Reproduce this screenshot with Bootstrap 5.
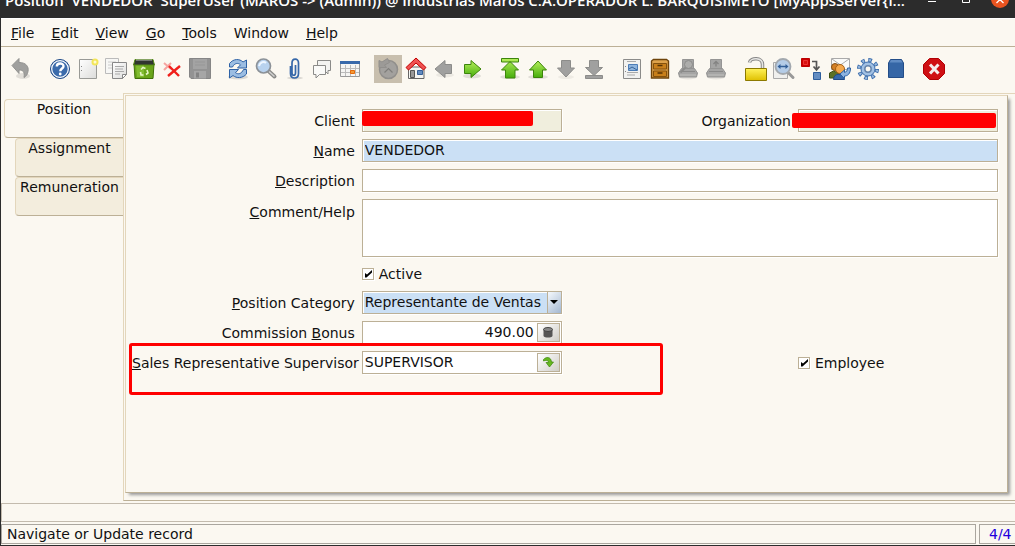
<!DOCTYPE html>
<html lang="en">
<head>
<meta charset="utf-8">
<meta name="viewport" content="width=device-width, initial-scale=1">
<title>Position VENDEDOR</title>
<link href="https://cdn.jsdelivr.net/npm/bootstrap@5.3.0/dist/css/bootstrap.min.css" rel="stylesheet">
<style>
:root{--cream:#fbf8f1;--line:#bcb096;--soft:#e3d6bb;--dark:#2c2c2c}
body{font-family:"DejaVu Sans",sans-serif;font-size:14px;line-height:18px;color:#111;background:var(--cream);border-left:1px solid var(--dark);border-bottom:1px solid var(--dark);overflow:hidden}
.titlebar{height:18px;background:var(--dark);color:#fff;font:600 15px/18px "Open Sans",sans-serif;padding:0 6px 9px 4px}
.win-title{white-space:pre;min-width:0}
.titlebar button,.tool,.cell-btn,.side-tab{appearance:none;border:0;background:none;padding:0;color:inherit}
.win-btns{gap:16px;height:18px;flex:none}
.win-btns button{width:18px;height:18px;display:block}
.win-btns svg{display:block}
.menubar{height:29px;border-top:1px solid #fff;border-bottom:1px solid var(--line);padding:0 2px}
.menubar a{color:#111;text-decoration:none;padding:0 9px 0 8px}
.toolbar{padding:8px 5px 10px}
.tool-set{margin-right:10px}
.tool-set.wide{margin-right:12px}
.tool{width:28px;height:28px;display:flex;align-items:center;justify-content:center}
.tool.held{background:#c8bfae}
.tool svg{width:24px;height:24px;display:block;overflow:visible}
.tabs-col{width:119px;margin-left:3px;padding-top:6px}
.side-tab{display:block;width:108px;margin-left:auto;height:39px;padding:0 0 20px;background:#f3eddd;border:1px solid var(--soft);border-bottom-color:var(--line);border-right:0;border-radius:4px 0 0 4px;text-align:center;white-space:nowrap}
.side-tab.current{width:100%;background:var(--cream)}
.panel-outer{border:1px solid var(--soft);border-right:0;border-bottom-color:var(--line);padding:1px 7px 7px 1px}
.sheet{border:1px solid var(--soft);border-right-color:var(--line);border-bottom-color:var(--line);box-shadow:3px 3px 3px -1px #999;padding:13px 9px 13px 6px;position:relative}
.form-area{display:grid;grid-template-columns:auto 200px 1fr 200px;gap:7px 3px;align-items:center}
.form-area>label{text-align:right;white-space:nowrap}
.wide-cell{grid-column:2/-1}
.field{display:block;width:100%;height:23px;padding:0 2px 2px;border:1px solid var(--line);border-radius:0;background:#fff;color:#111;box-shadow:1px 1px 0 #fff,inset 1px 1px 0 #fff;font:inherit;line-height:18px;outline:0;appearance:none}
textarea.field{height:58px;resize:none}
.field.locked{background:#f0eedd}
.field.needed{background:#cbe0f5}
.cover{position:absolute;height:15px;background:#f00;border-radius:2px}
.cover.at-client{left:0;top:2px;width:171px}
.cover.at-org{left:-6px;top:4px;width:204px}
.combo{display:flex;border:1px solid var(--line);box-shadow:1px 1px 0 #fff;height:23px;background:#fff}
.combo .field{border:0;height:21px;box-shadow:inset 1px 1px 0 #fff;min-width:0;flex:1}
.cell-btn{width:23px;height:19px;margin:1px;border:1px solid var(--line);background:linear-gradient(135deg,#fff,#d0cec8);display:flex;align-items:center;justify-content:center;flex:none}
.drop{width:14px;border-left:1px solid var(--line);background:linear-gradient(135deg,#f5f9fd,#a3b7d0);display:flex;align-items:center;justify-content:center;flex:none}
.tick-row{height:20px;gap:5px}
.tick{appearance:none;width:12px;height:12px;margin:0;border:1px solid var(--line);box-shadow:1px 1px 0 #fff;background:#fff url("data:image/svg+xml,%3Csvg xmlns='http://www.w3.org/2000/svg' viewBox='0 0 10 10'%3E%3Cpath d='M2 4v4.500l1.500 0L9 3.500V1L4 5.500z' fill='%23000'/%3E%3C/svg%3E")}
.callout-box{position:absolute;left:3px;top:247px;width:534px;height:52px;border:3px solid #f00;border-radius:3px;pointer-events:none}
.empty-bar{height:19px;margin-top:2px;border:1px solid #c3bbae;border-right:0}
.status{margin-top:2px;gap:3px;margin-bottom:1px}
.status>div{border:1px solid #aaa69f;height:20px;padding:0 5px}
.status>.rec{width:36px;border-right:0;color:#20d;padding:0 0 0 9px}
</style>
</head>
<body class="d-flex flex-column min-vh-100">
<header class="titlebar d-flex justify-content-between align-items-end overflow-hidden">
<div class="win-title">Position  VENDEDOR  SuperUser (MAROS -&gt; (Admin)) @ Industrias Maros C.A.OPERADOR L. BARQUISIMETO [MyAppsServer{l...</div>
<div class="win-btns d-flex">
<button aria-label="Minimize"><svg width="18" height="18"><path d="M5 10.500h8" stroke="#fff"/></svg></button>
<button aria-label="Maximize"><svg width="18" height="18"><path d="M5.500 4.500h7v7h-7z" stroke="#fff" fill="none"/></svg></button>
<button aria-label="Close"><svg width="18" height="18"><circle cx="9" cy="8" r="9" fill="#e95420"/><path d="M5.500 5l7 7M12.500 5l-7 7" stroke="#fff" stroke-width="1.300"/></svg></button>
</div>
</header>

<nav class="menubar d-flex align-items-center">
<a href="#"><u>F</u>ile</a><a href="#"><u>E</u>dit</a><a href="#"><u>V</u>iew</a><a href="#"><u>G</u>o</a><a href="#"><u>T</u>ools</a><a href="#">Window</a><a href="#"><u>H</u>elp</a>
</nav>

<svg width="0" height="0" class="position-absolute" aria-hidden="true">
<defs>
<linearGradient id="green" x2="0" y2="1"><stop stop-color="#b7ef5b"/><stop offset="1" stop-color="#45ad0c"/></linearGradient>
<linearGradient id="gold" x2="0" y2="1"><stop stop-color="#fff25a"/><stop offset="1" stop-color="#dfc000"/></linearGradient>
<linearGradient id="paper" x2="1" y2="1"><stop stop-color="#fff"/><stop offset="1" stop-color="#dcdcda"/></linearGradient>
<path id="arrow" d="M12 4l8.500 9h-4v7.500h-9V13h-4z"/>
<g id="printer"><ellipse cx="12" cy="20" rx="9" ry="2.500" fill="#000" opacity=".08"/><path d="M6.500 2.500h11v9h-11z" fill="#a5a5a4" stroke="#959594"/><path d="M5.500 11.500h13l3 4.500-1 4h-17l-1-4z" fill="#a5a5a4" stroke="#949493"/><path d="M5 14.500h14" stroke="#8a8a89"/><path d="M4 18h16" stroke="#b8b8b6" stroke-width="1.500"/></g>
</defs>
</svg>

<div class="toolbar d-flex" role="toolbar">
<div class="tool-set wide d-flex">
<button class="tool" aria-label="Undo"><svg viewBox="0 0 24 24"><ellipse cx="15" cy="19" rx="7" ry="3" fill="#000" opacity=".1"/><path d="M4 8.500L11 1.500V5.500c7 0 10 4 9 9-.500 3-2 5-4 6 1-5.500-1-7.500-5-7.500v3.500z" fill="#a0a09e" stroke="#929290"/></svg></button>
</div>
<div class="tool-set d-flex">
<button class="tool" aria-label="Help"><svg viewBox="0 0 24 24"><circle cx="12" cy="12" r="9.500" fill="#3b6bab" stroke="#204a87"/><circle cx="12" cy="12" r="8.300" fill="none" stroke="#fff" stroke-width="1.200"/><path d="M8.800 9.500c0-4 6.700-4 6.700-.300 0 2.300-3.200 2.300-3.200 5" fill="none" stroke="#fff" stroke-width="2.400"/><circle cx="12.200" cy="17" r="1.400" fill="#fff"/></svg></button>
<button class="tool" aria-label="New"><svg viewBox="0 0 24 24"><path d="M3.500 2.500h17v19h-17z" fill="url(#paper)" stroke="#999a96"/><path d="M5.500 9v1m0 3v1" stroke="#888"/><circle cx="19" cy="5" r="3.500" fill="#f3e659"/><circle cx="19" cy="5" r="1.500" fill="#fffbd0"/></svg></button>
<button class="tool" aria-label="Copy"><svg viewBox="0 0 24 24"><path d="M1.500 1.500h13v15h-13z" fill="#f7f7f5" stroke="#bbb"/><path d="M4 5h8M4 8h5M4 11h4" stroke="#ccc"/><path d="M8.500 5.500h14v12l-4 4h-10z" fill="url(#paper)" stroke="#888"/><path d="M11 9.500h9M11 12h8M11 14.500h9M11 17h5" stroke="#aaa"/><path d="M22.500 17.500h-4v4z" fill="#fff" stroke="#888"/></svg></button>
<button class="tool" aria-label="Delete"><svg viewBox="0 0 24 24"><path d="M2 7h20l-1 14.500H3z" fill="#6aa51a" stroke="#3f7008"/><path d="M4 8h8v12H5z" fill="#8cc63a" opacity=".7"/><path d="M3 2.500h18L22.500 8h-21z" fill="#303530" stroke="#558b14"/><path d="M4 3h16" stroke="#b9bdb5"/><path d="M9 12.500l2-2 2.500 1M15 13l1 3-2 1.500M11.500 18H9l-.500-3" fill="none" stroke="#e5f5c5" stroke-width="1.600"/></svg></button>
<button class="tool" aria-label="Delete selection"><svg viewBox="0 0 24 24"><path d="M4 6l7 6M11 6l-7 7" stroke="#f6a4a0" stroke-width="2"/><path d="M9 9l10 10M20 9L8 19" stroke="#f01f1b" stroke-width="2.400"/></svg></button>
<button class="tool" aria-label="Save"><svg viewBox="0 0 24 24"><path d="M1.500 1.500h21v20H3l-1.500-1.500z" fill="#939393" stroke="#868686"/><path d="M5 2h14v10H5z" fill="#a3a3a3"/><path d="M7 5h10M7 8h10" stroke="#979797"/><path d="M6 14h12v7.500H6z" fill="#a6a6a6"/><path d="M8 15.500h3v5H8z" fill="#838383"/></svg></button>
</div>
<div class="tool-set d-flex">
<button class="tool" aria-label="Refresh"><svg viewBox="0 0 24 24"><ellipse cx="12" cy="20" rx="10" ry="2.500" fill="#000" opacity=".12"/><path d="M3.500 10V6.500c4-5 10-5 13.500-1.500l3.500-2v8h-9l3-3.200C12 5.500 8.500 6 6.500 10z" fill="#9bbde2" stroke="#2e62a6"/><path d="M20.500 12.500V17c-4 4.500-10 4.500-13.500 1.500l-3.500 2.500v-8.500h9l-3 3.200c2.500 2 6 1.300 8-3.200z" fill="#9bbde2" stroke="#2e62a6"/></svg></button>
<button class="tool" aria-label="Find"><svg viewBox="0 0 24 24"><path d="M14.500 14l6 5.500" stroke="#8a8a88" stroke-width="4" stroke-linecap="round"/><path d="M15 14.500l5.500 5" stroke="#d2d2d0" stroke-width="1.500"/><circle cx="9.500" cy="9" r="7" fill="#b8d2ee" stroke="#8c9298" stroke-width="1.700"/><path d="M5 9c1-4 5-5 7-3" stroke="#eef6ff" stroke-width="2" fill="none"/></svg></button>
<button class="tool" aria-label="Attachment"><svg viewBox="0 0 24 24"><ellipse cx="13" cy="21" rx="8" ry="1.500" fill="#000" opacity=".12"/><path d="M8.500 9v7.500c0 6 8 6 8 0V6c0-5.500-6.500-5-6.500 0v10c0 3 3.500 3 3.500 0V8" fill="none" stroke="#3768a9" stroke-width="1.700"/></svg></button>
<button class="tool" aria-label="Chat"><svg viewBox="0 0 24 24"><path d="M7.500 3.500h13v10h-2.500v3.500l-3.500-3.500h-7z" fill="#f3f3f1" stroke="#8b8b89"/><path d="M3.500 8.500h12v9h-6L6 21v-3.500H3.500z" fill="#fafaf8" stroke="#8b8b89"/></svg></button>
<button class="tool" aria-label="Grid toggle"><svg viewBox="0 0 24 24"><path d="M2.500 4.500h19v15h-19z" fill="#f5f5f3" stroke="#999"/><path d="M2 4h20v3H2z" fill="#3869aa"/><path d="M3 11.500h18M3 15.500h18M7.500 8v11M12.500 8v11M17.500 8v11" stroke="#bbb"/><path d="M12.500 13.500h4v3h-4z" fill="#f39a35" stroke="#e5690a"/></svg></button>
</div>
<div class="tool-set d-flex">
<button class="tool held" aria-label="History"><svg viewBox="0 0 24 24"><circle cx="12.500" cy="12.500" r="9" fill="#a3a19e" stroke="#918f8c" stroke-width="1.500"/><path d="M3 3.500v7h7.500L8.500 8l5-2.500-2-4L6 5z" fill="#9c9a97" stroke="#918f8c"/><path d="M8.500 15.500l4-4 4 4" fill="none" stroke="#7f7e7b" stroke-width="1.200"/></svg></button>
<button class="tool" aria-label="Home"><svg viewBox="0 0 24 24"><path d="M5 10h15v11.500H4.500V11z" fill="#f5f5f2" stroke="#666"/><path d="M12 1l10 9.500-2.500 2.500L12 6l-7.500 7L2 10.500z" fill="#f05252" stroke="#c20000"/><path d="M6.500 13.500h4v7h-4z" fill="#999" stroke="#555"/><path d="M13.500 13.500h5v4h-5z" fill="#638bc0" stroke="#345f99"/></svg></button>
<button class="tool" aria-label="Previous tab"><svg viewBox="0 0 24 24"><ellipse cx="13" cy="18" rx="9" ry="2.500" fill="#000" opacity=".06"/><path d="M19.500 7.500h-6.500V3.500L3 12l10 8.500v-4h6.500z" fill="#a0a09f" stroke="#8c8c8a"/></svg></button>
<button class="tool" aria-label="Next tab"><svg viewBox="0 0 24 24"><ellipse cx="12" cy="19" rx="9" ry="2.500" fill="#000" opacity=".1"/><path d="M4.500 7.500H11V3.500L21 12l-10 8.500v-4H4.500z" fill="url(#green)" stroke="#3c850b"/></svg></button>
</div>
<div class="tool-set d-flex">
<button class="tool" aria-label="First record"><svg viewBox="0 0 24 24"><ellipse cx="12" cy="20" rx="10" ry="2" fill="#000" opacity=".1"/><path d="M3.500 1.500h17V5h-17zM12 4.500l8.500 8.500H17v8H7.500v-8h-4z" fill="url(#green)" stroke="#3c850b"/></svg></button>
<button class="tool" aria-label="Previous record"><svg viewBox="0 0 24 24"><ellipse cx="12" cy="20" rx="10" ry="2" fill="#000" opacity=".1"/><use href="#arrow" fill="url(#green)" stroke="#3c850b"/></svg></button>
<button class="tool" aria-label="Next record"><svg viewBox="0 0 24 24"><ellipse cx="12" cy="20" rx="8" ry="2" fill="#000" opacity=".05"/><use href="#arrow" transform="rotate(180 12 12)" fill="#a0a09f" stroke="#8c8c8a"/></svg></button>
<button class="tool" aria-label="Last record"><svg viewBox="0 0 24 24"><path d="M7.500 3.500h9v7h4L12 18.500l-8.500-8h4zM3.500 18.500h17v3h-17z" fill="#a0a09f" stroke="#8c8c8a"/></svg></button>
</div>
<div class="tool-set wide d-flex">
<button class="tool" aria-label="Report"><svg viewBox="0 0 24 24"><path d="M3.500 2.500h17v19h-17z" fill="#f2f2f0" stroke="#8b8b89"/><path d="M7 4.500h9M7 15.500h11M7 18h8" stroke="#aaa"/><path d="M8.500 7.500h9v6h-9z" fill="#8eb4dd" stroke="#4b7db8"/><path d="M9 12l3-2 5 3" stroke="#356298" fill="none"/><path d="M5.500 9v1m0 4v1" stroke="#888"/></svg></button>
<button class="tool" aria-label="Archive"><svg viewBox="0 0 24 24"><path d="M3.500 4l2-1.500h13l2 1.500v17h-17z" fill="#dda24b" stroke="#6e430a" stroke-width="1.400"/><path d="M5.500 6.500h13v5.500h-13zM5.500 14h13v5.500h-13z" fill="#c87f1a" stroke="#84510c"/><path d="M9.500 8.500h5M9.500 16h5" stroke="#563304" stroke-width="1.400"/></svg></button>
<button class="tool" aria-label="Print preview"><svg viewBox="0 0 24 24"><use href="#printer"/><circle cx="12.500" cy="7.500" r="4" fill="#adadab" stroke="#8c8c8a"/><path d="M9.500 10.500l-5 5" stroke="#8c8c8a" stroke-width="1.800"/></svg></button>
<button class="tool" aria-label="Print"><svg viewBox="0 0 24 24"><use href="#printer"/><path d="M12 9.500v-5M9.500 7L12 4.500 14.500 7" fill="none" stroke="#838382" stroke-width="1.300"/></svg></button>
</div>
<div class="tool-set d-flex">
<button class="tool" aria-label="Lock"><svg viewBox="0 0 24 24"><path d="M5.500 5.500c1-5 13-5.500 13 2v4" fill="none" stroke="#888" stroke-width="3.500"/><path d="M5.500 5.500c1-5 13-5.500 13 2v4" fill="none" stroke="#e6e6e4" stroke-width="1.500"/><path d="M1.500 11.500h21v12h-21z" fill="url(#gold)" stroke="#8c7900"/></svg></button>
<button class="tool" aria-label="Zoom across"><svg viewBox="0 0 24 24"><path d="M1.500 5.500h14v16h-14z" fill="#f0f0ee" stroke="#aaa"/><path d="M15.500 15l5.500 5.500" stroke="#999" stroke-width="3" stroke-linecap="round"/><circle cx="11" cy="9.500" r="7.500" fill="#b4cce7" stroke="#a2a8ae" stroke-width="1.800"/><path d="M5.500 9.500l3-2.500v1.800h5V7l3 2.500-3 2.500v-1.800h-5V12z" fill="#325f98"/></svg></button>
<button class="tool" aria-label="Workflow"><svg viewBox="0 0 24 24"><path d="M1.500 1.500h8v8h-8z" fill="#cc0000" stroke="#b00"/><path d="M3.500 3.500h4v4h-4z" fill="#d81111" stroke="#e33"/><path d="M12 4.500h4.500V12m-3-2.500l3 3.500 3-3.500" fill="none" stroke="#555" stroke-width="1.700"/><path d="M13.500 15.500h7v7h-7z" fill="#638dc2" stroke="#2d5d9c"/></svg></button>
<button class="tool" aria-label="Request"><svg viewBox="0 0 24 24"><path d="M3.500 1.500h18v11h-18z" fill="#fafaf8" stroke="#aaa"/><path d="M4 2l8.500 6L21 2" fill="none" stroke="#aaa"/><circle cx="7" cy="10" r="3.500" fill="#d37f25" stroke="#865014"/><path d="M1.500 21v-5l4-2 5 2v5z" fill="#5c7125" stroke="#3f5014"/><circle cx="12" cy="12" r="4.500" fill="#f5a84b" stroke="#a65f12"/><path d="M5.500 22.500c0-7 10-7 11 0z" fill="#3768a9" stroke="#204a87"/><path d="M22.500 11c0 6-3 8-6 8v2.500L12 17l4.500-4v2.500c2-.500 3-2 3-4.500z" fill="#8db3df" stroke="#2c61a3"/></svg></button>
<button class="tool" aria-label="Preferences"><svg viewBox="0 0 24 24"><circle cx="12" cy="12" r="9" fill="none" stroke="#3c6dac" stroke-width="4" stroke-dasharray="3.600 3.470"/><circle cx="12" cy="12" r="9" fill="none" stroke="#9abbe0" stroke-width="2.400" stroke-dasharray="1.800 5.270" stroke-dashoffset="-.900"/><circle cx="12" cy="12" r="7" fill="#a0c0e4" stroke="#3c6dac"/><circle cx="12" cy="12" r="3.200" fill="#fbf8f1" stroke="#6685ad" stroke-width="1.500"/></svg></button>
<button class="tool" aria-label="Product info"><svg viewBox="0 0 24 24"><path d="M4.500 6l2-3.500h11l2 3.500v14.500h-15z" fill="#3566a6" stroke="#234d88"/><path d="M5.500 5.500l1.500-2.500h10l1.500 2.500z" fill="#5f8bc3"/></svg></button>
</div>
<div class="tool-set d-flex">
<button class="tool" aria-label="Exit"><svg viewBox="0 0 24 24"><path d="M7.500 1.500h9l6 6v9l-6 6h-9l-6-6v-9z" fill="#cf1014" stroke="#b00005"/><path d="M8 7.500l8.500 9M16.500 7.500L8 16.500" stroke="#f5eeee" stroke-width="3"/></svg></button>
</div>
</div>

<main class="d-flex flex-grow-1">
<div class="tabs-col flex-shrink-0" role="tablist">
<button class="side-tab current" role="tab" aria-selected="true">Position</button>
<button class="side-tab" role="tab">Assignment</button>
<button class="side-tab" role="tab">Remuneration</button>
</div>
<section class="panel-outer d-flex flex-grow-1">
<div class="sheet flex-grow-1">
<form class="form-area">
<label for="client" class="pe-1">Client</label>
<div class="position-relative"><input id="client" class="field locked" readonly><span class="cover at-client"></span></div>
<label for="org" class="pe-1">Organization</label>
<div class="position-relative"><input id="org" class="field locked" readonly><span class="cover at-org"></span></div>

<label for="name" class="pe-1"><u>N</u>ame</label>
<input id="name" class="field needed wide-cell" value="VENDEDOR">

<label for="desc" class="pe-1"><u>D</u>escription</label>
<input id="desc" class="field wide-cell">

<label for="help" class="align-self-start pt-1 pe-1"><u>C</u>omment/Help</label>
<textarea id="help" class="field wide-cell"></textarea>

<div class="wide-cell tick-row d-flex align-items-center"><input type="checkbox" id="active" class="tick" checked><label for="active">Active</label></div>

<label for="category" class="pe-1"><u>P</u>osition Category</label>
<div class="combo"><select id="category" class="field needed"><option>Representante de Ventas</option></select><span class="drop"><svg width="8" height="5"><path d="M0 0h8L4 4z"/></svg></span></div>
<span></span><span></span>

<label for="bonus" class="pe-1">Commission <u>B</u>onus</label>
<div class="combo"><input id="bonus" class="field text-end" value="490.00"><button type="button" class="cell-btn" aria-label="Calculator"><svg width="10" height="11"><path d="M.500 2.500v6.500c1 2 8 2 9 0V2.500z" fill="#555"/><ellipse cx="5" cy="2.500" rx="4.500" ry="2" fill="#888" stroke="#444"/></svg></button></div>
<span></span><span></span>

<label for="supervisor"><u>S</u>ales Representative Supervisor</label>
<div class="combo"><input id="supervisor" class="field" value="SUPERVISOR"><button type="button" class="cell-btn" aria-label="Look up"><svg width="11" height="11" viewBox="0 0 11 11"><path d="M.500 2.500C3-.500 8-.500 8.500 5h2L6.500 10 3 5.500h2.500C5.500 3 3 3 .500 4z" fill="#66b820" stroke="#3c850b" stroke-width=".700"/></svg></button></div>
<span></span>
<div class="tick-row d-flex align-items-center"><input type="checkbox" id="employee" class="tick" checked><label for="employee">Employee</label></div>
</form>
<div class="callout-box"></div>
</div>
</section>
</main>
<div class="empty-bar"></div>
<footer class="status d-flex">
<div class="flex-grow-1">Navigate or Update record</div>
<div class="rec">4/4</div>
</footer>
<script src="https://cdn.jsdelivr.net/npm/bootstrap@5.3.0/dist/js/bootstrap.bundle.min.js"></script>
</body>
</html>
